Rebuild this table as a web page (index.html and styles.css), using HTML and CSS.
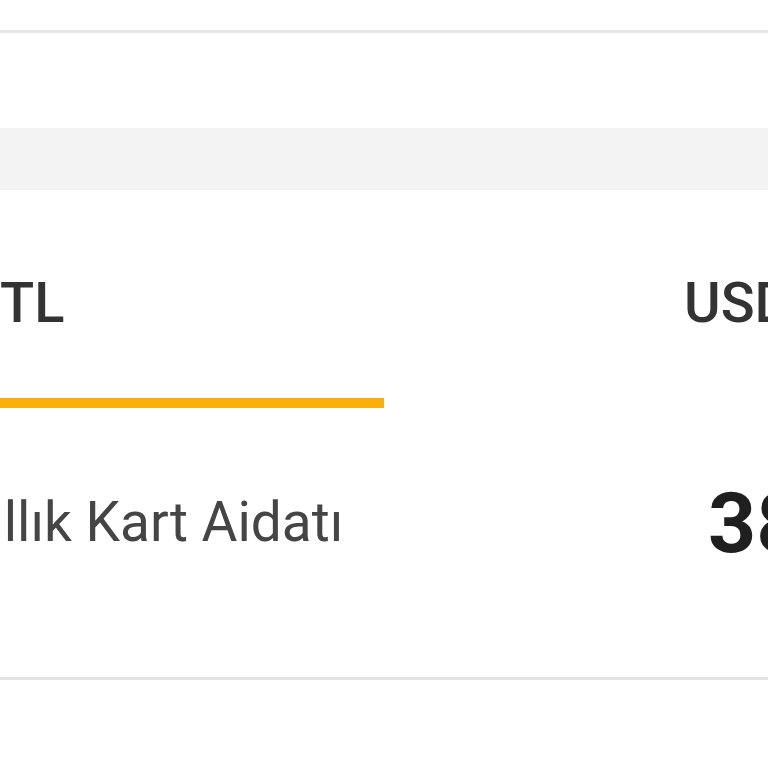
FILE: index.html
```html
<!DOCTYPE html>
<html lang="tr">
<head>
<meta charset="utf-8">
<link rel="stylesheet" href="styles.css">
</head>
<body>
<div class="page">
  <div class="topbar"></div>
  <div class="spacer"></div>
  <div class="band"></div>
  <div class="tabs">
    <div class="tab tab-active"><span class="tab-text">TL</span></div>
    <div class="tab tab-right"><span class="tab-text">USD</span></div>
  </div>
  <div class="row">
    <div class="label">Yıllık Kart Aidatı</div>
    <div class="amount">38,00 TL</div>
  </div>
  <div class="after"></div>
</div>
</body>
</html>
```
FILE: styles.css
```css
html, body {
  margin: 0;
  padding: 0;
  background: #ffffff;
}
body {
  width: 768px;
  height: 768px;
  overflow: hidden;
  font-family: Roboto, "Liberation Sans", sans-serif;
}
.page {
  width: 768px;
  overflow: hidden;
}
.topbar {
  height: 30px;
  border-bottom: 3px solid #e6e6e6;
}
.spacer {
  height: 95px;
}
.band {
  height: 62px;
  background: #f3f3f3;
}
.tabs {
  display: grid;
  grid-template-columns: 384px 384px;
}
.tab {
  padding-top: 85px;
  height: 218px;
  box-sizing: border-box;
  white-space: nowrap;
}
.tab-text {
  display: block;
  font-size: 56px;
  line-height: 56px;
  font-weight: 500;
  color: #333333;
}
.tab-active {
  border-bottom: 10px solid #f9b00c;
}
.tab-right {
  padding-left: 300px;
}
.row {
  display: grid;
  grid-template-columns: 708px 200px;
  height: 272px;
  box-sizing: border-box;
  padding-top: 74px;
  border-bottom: 3px solid #e2e2e2;
  white-space: nowrap;
}
.label {
  margin-top: 13px;
  font-size: 55px;
  line-height: 55px;
  color: #454545;
  text-indent: -43px;
}
.amount {
  font-size: 84px;
  line-height: 84px;
  font-weight: 700;
  color: #1f1f1f;
}
.after {
  height: 90px;
}
```
